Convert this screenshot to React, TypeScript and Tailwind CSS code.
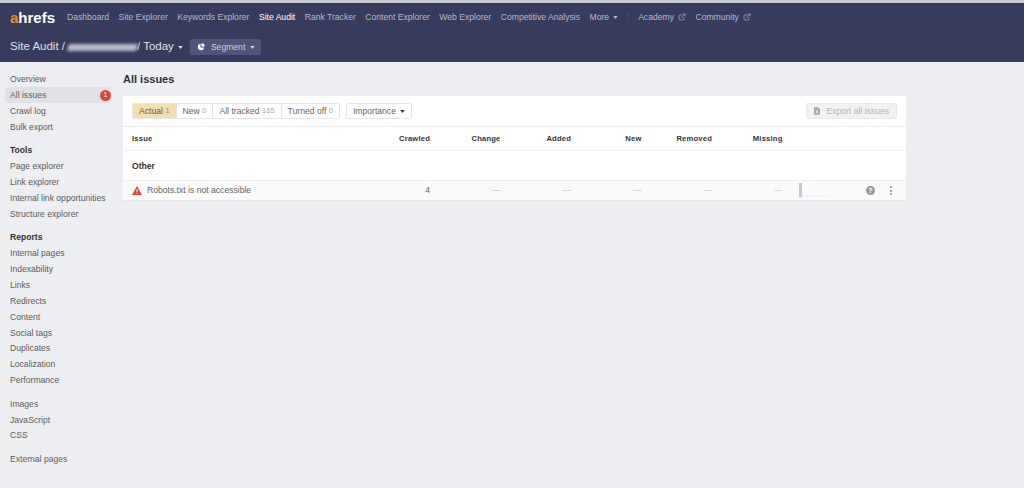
import { ExternalLink } from "lucide-react";

const NAV_ITEMS = ["Dashboard", "Site Explorer", "Keywords Explorer", "Site Audit", "Rank Tracker", "Content Explorer", "Web Explorer", "Competitive Analysis"];
const COLUMNS = ["Crawled", "Change", "Added", "New", "Removed", "Missing"];
const VALUES = ["4", "—", "—", "—", "—", "—"];

const SIDEBAR_GROUPS = [
    { items: ["Overview", "All issues", "Crawl log", "Bulk export"] },
    { title: "Tools", items: ["Page explorer", "Link explorer", "Internal link opportunities", "Structure explorer"] },
    { title: "Reports", items: ["Internal pages", "Indexability", "Links", "Redirects", "Content", "Social tags", "Duplicates", "Localization", "Performance"] },
    { items: ["Images", "JavaScript", "CSS"] },
    { items: ["External pages"] },
];

const TABS = [
    { label: "Actual", count: "1", active: true },
    { label: "New", count: "0" },
    { label: "All tracked", count: "165" },
    { label: "Turned off", count: "0" },
];

function Caret({ className = "" }: { className?: string }) {
    return (
        <svg viewBox="0 0 6 4" className={`w-[5px] h-[3px] fill-current ${className}`}>
            <path d="M0 0h6L3 4z" />
        </svg>
    );
}

function TopNav() {
    return (
        <div className="flex items-center h-[29px] pl-[10px]">
            <span className="text-[15px] font-bold text-white mr-[12px] leading-none">
                <span className="text-[#f08c1e]">a</span>hrefs
            </span>
            <div className="flex items-center gap-[9.5px] text-[8.6px] text-[#b4b8c9]">
                {NAV_ITEMS.map((item) => (
                    <span key={item} className={item === "Site Audit" ? "text-white" : ""}>
                        {item}
                    </span>
                ))}
                <span className="flex items-center gap-[4px]">
                    More <Caret />
                </span>
                <span className="w-px h-[11px] bg-[#43476a]" />
                <span className="flex items-center gap-[4px]">
                    Academy <ExternalLink size={8} />
                </span>
                <span className="flex items-center gap-[4px]">
                    Community <ExternalLink size={8} />
                </span>
            </div>
        </div>
    );
}

function SubNav() {
    return (
        <div className="flex items-center h-[30px] pl-[10px] text-[11.5px] text-[#dfe1e8]">
            <span>Site Audit /</span>
            <span className="w-[69px] h-[7px] ml-[3px] bg-[#b8bac6] -skew-x-12 blur-[1.5px]" />
            <span className="text-[#c5c8d4] mr-[3px]">/</span>
            <span>Today</span>
            <Caret className="ml-[4px] text-[#dfe1e8]" />
            <button className="flex items-center gap-[6px] h-[16px] ml-[7px] pl-[7px] pr-[6px] rounded-[2px] bg-[#50557a] text-[8.6px] text-[#cfd2dd]">
                <svg viewBox="0 0 10 10" className="w-[8px] h-[8px] fill-white">
                    <path d="M4.4 1a4 4 0 1 0 4.6 4.6H4.4z" />
                    <path d="M5.6 0.4V4.4H9.6A4 4 0 0 0 5.6 0.4z" />
                </svg>
                Segment
                <Caret className="-ml-[1px]" />
            </button>
        </div>
    );
}

function Sidebar() {
    return (
        <aside className="w-[123px] shrink-0 pt-[9.5px] pl-[5px] pr-[12px] flex flex-col gap-[7.6px] text-[8.6px] text-[#5c5c5c]">
            {SIDEBAR_GROUPS.map((group, i) => (
                <div key={i} className="flex flex-col">
                    {group.title && <div className="h-[15.9px] flex items-center pl-[5px] font-bold text-[#333]">{group.title}</div>}
                    {group.items.map((item) => (
                        <div key={item} className={`h-[15.9px] flex items-center justify-between pl-[5px] whitespace-nowrap rounded-[2px] ${item === "All issues" ? "bg-[#dfe1e5]" : ""}`}>
                            {item}
                            {item === "All issues" && (
                                <span className="w-[11px] h-[11px] rounded-full bg-[#d9473a] text-white text-[7px] flex items-center justify-center">1</span>
                            )}
                        </div>
                    ))}
                </div>
            ))}
        </aside>
    );
}

function Filters() {
    return (
        <div className="flex items-center h-[31px] pl-[9px] pr-[9px] border-b border-[#eeeeee]">
            <div className="flex h-[16px] rounded-[2px] border border-[#e6e6e6] text-[8.6px] text-[#666]">
                {TABS.map((tab) => (
                    <span key={tab.label} className={`flex items-center gap-[2.5px] px-[6px] border-r border-[#e6e6e6] last:border-r-0 ${tab.active ? "bg-[#f6dcae] text-[#6b5a3c]" : ""}`}>
                        {tab.label}
                        <span className={tab.active ? "text-[#a08a5e] text-[7.5px]" : "text-[#aaa] text-[7.5px]"}>{tab.count}</span>
                    </span>
                ))}
            </div>
            <button className="flex items-center gap-[4px] h-[16px] ml-[6px] px-[6px] rounded-[2px] border border-[#e6e6e6] text-[8.6px] text-[#666]">
                Importance
                <Caret className="text-[#333]" />
            </button>
            <button className="flex items-center gap-[6px] h-[16px] ml-auto px-[7px] rounded-[2px] border border-[#e8e8e8] bg-[#f1f1f1] text-[8.6px] text-[#b5b5b5]">
                <svg viewBox="0 0 8 10" className="w-[6px] h-[8px] fill-[#a8a8a8]">
                    <path d="M0 0h5.5L8 2.5V10H0zM3.2 3.5v2.6H2L4 8l2-1.9H4.8V3.5z" fillRule="evenodd" />
                </svg>
                Export all issues
            </button>
        </div>
    );
}

function IssuesTable() {
    return (
        <section className="bg-white w-[783px] h-[105px] flex flex-col">
            <Filters />
            <div className="grid grid-cols-[227.5px_repeat(6,70.5px)] items-center h-[24px] pt-[1px] pl-[9px] border-b border-[#f2f2f2] text-[7.6px] font-bold text-[#333] tracking-[0.2px]">
                <span>Issue</span>
                {COLUMNS.map((col) => (
                    <span key={col} className="text-right">
                        {col}
                    </span>
                ))}
            </div>
            <div className="h-[29px] flex items-center pt-[1px] pl-[9px] text-[8.6px] font-bold text-[#333]">Other</div>
            <div className="relative grid grid-cols-[227.5px_repeat(6,70.5px)] items-center h-[21px] pl-[9px] bg-[#fafafa] border-y border-t-[#efefef] border-b-[#e6e6e6] text-[8.6px] text-[#666]">
                <span className="flex items-center gap-[5px]">
                    <svg viewBox="0 0 10 9" className="w-[10px] h-[9px] fill-[#d2473c]">
                        <path d="M5 0l5 9H0z" />
                        <path d="M4.5 3h1v3.2h-1zM4.5 6.9h1v1h-1z" className="fill-white" />
                    </svg>
                    Robots.txt is not accessible
                </span>
                {VALUES.map((value, i) => (
                    <span key={i} className={`text-right ${i === 0 ? "" : "text-[#c4c4c4]"}`}>
                        {value}
                    </span>
                ))}
                <div className="absolute left-[676px] top-[2px] w-[30px] h-[14px] border-b border-[#f0f0f0]">
                    <div className="w-[3px] h-[14px] bg-[#b5cde3]" />
                </div>
                <svg viewBox="0 0 10 10" className="absolute left-[743px] top-[5px] w-[9px] h-[9px]">
                    <circle cx="5" cy="5" r="5" fill="#999" />
                    <text x="5" y="8" fontSize="8" fontWeight="700" textAnchor="middle" fill="#fff" fontFamily="Liberation Sans, sans-serif">?</text>
                </svg>
                <div className="absolute left-[767px] top-[5px] flex flex-col gap-[1.5px]">
                    <span className="w-[2px] h-[2px] rounded-full bg-[#888]" />
                    <span className="w-[2px] h-[2px] rounded-full bg-[#888]" />
                    <span className="w-[2px] h-[2px] rounded-full bg-[#888]" />
                </div>
            </div>
        </section>
    );
}

export default function App() {
    return (
        <div className="w-[1024px] h-[488px] overflow-hidden flex flex-col bg-[#eceef1] font-['Liberation_Sans',sans-serif]">
            <div className="h-[3px] bg-[#c9cbd0]" />
            <header className="h-[59px] bg-[#373b5c] flex flex-col">
                <TopNav />
                <SubNav />
            </header>
            <div className="flex flex-1">
                <Sidebar />
                <main className="flex-1">
                    <h1 className="h-[34px] flex items-center text-[11px] font-bold text-[#333]">All issues</h1>
                    <IssuesTable />
                </main>
            </div>
        </div>
    );
}
